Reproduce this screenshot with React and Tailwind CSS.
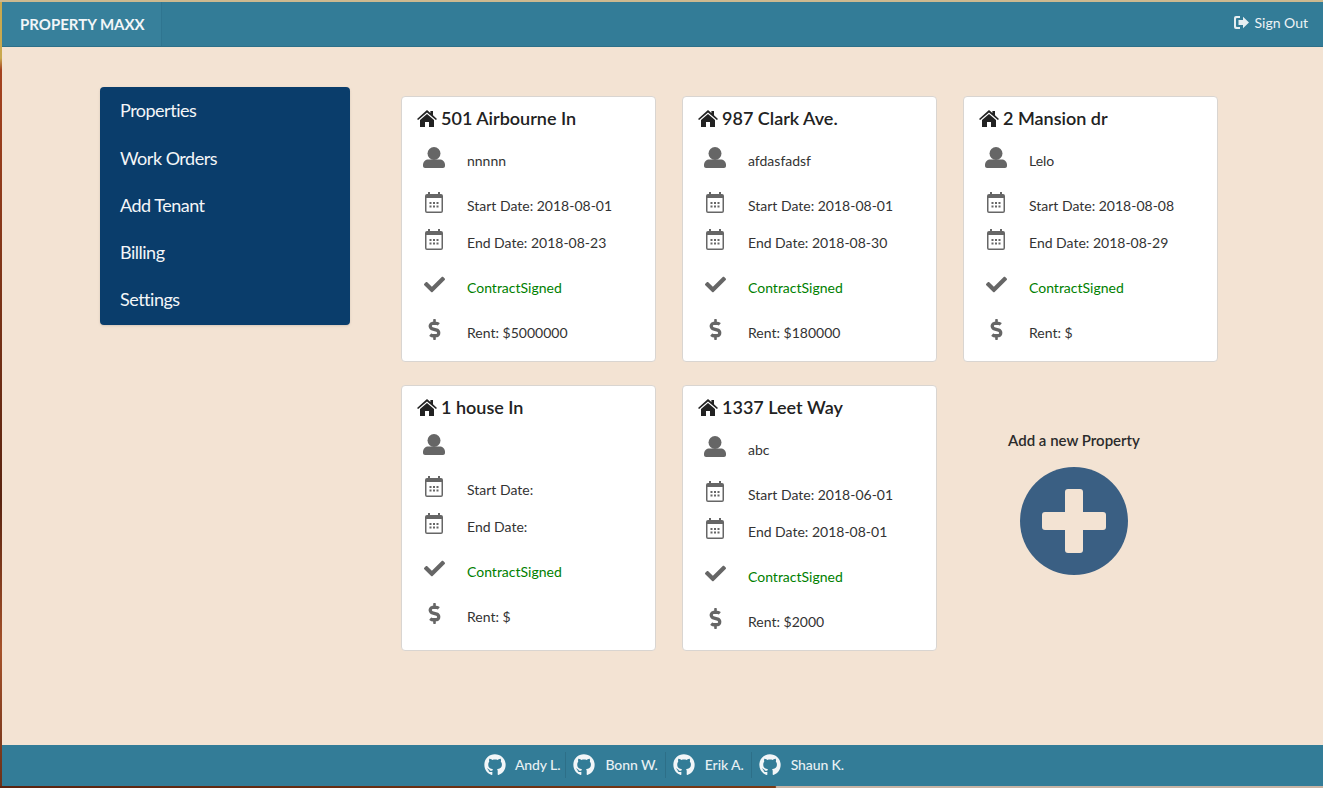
import React from "react";
import { FaGithub, FaCheck, FaDollarSign } from "react-icons/fa";

const HomeIcon = () => (
  <svg width="20" height="17" viewBox="0 0 20 17" className="shrink-0 text-[#222]" fill="currentColor">
    <path d="M10 0 L13.4 3 V1 H16 V5.3 L20 8.9 L18.9 10.1 L10 2.5 L1.1 10.1 L0 8.9 Z" />
    <path d="M10 4 L17 10 V17 H12 V12 H8 V17 H3 V10 Z" />
  </svg>
);
const UserIcon = () => (
  <svg width="22" height="21" viewBox="0 0 22 21" fill="#666">
    <circle cx="11" cy="6.500" r="6.500" />
    <path d="M0 18 C0 14.500 2.500 12.500 5.500 12.500 H16.500 C19.500 12.500 22 14.500 22 18 V19 C22 20 21 21 20 21 H2 C1 21 0 20 0 19 Z" />
  </svg>
);
const CalIcon = () => (
  <svg width="18" height="21" viewBox="0 0 18 21" fill="#666">
    <rect x="3" y="0" width="2" height="4" />
    <rect x="13" y="0" width="2" height="4" />
    <path fillRule="evenodd" d="M2 2 H16 A2 2 0 0 1 18 4 V19 A2 2 0 0 1 16 21 H2 A2 2 0 0 1 0 19 V4 A2 2 0 0 1 2 2 Z M1.500 6 V19 A0.500 0.500 0 0 0 2 19.500 H16 A0.500 0.500 0 0 0 16.500 19 V6 Z" />
    {[4.500, 8, 11.500].flatMap((x) => [10, 13.500].map((y) => <rect key={x + "-" + y} x={x} y={y} width="2" height="2" />))}
  </svg>
);
const LogOut = () => (
  <svg width="15" height="13" viewBox="0 0 15 13" fill="#e6eef1">
    <path d="M2 0 H6 V2 H3 Q2 2 2 3 V10 Q2 11 3 11 H6 V13 H2 Q0 13 0 11 V2 Q0 0 2 0 Z" />
    <path d="M4.500 4 H9 V0.800 L15 6.500 L9 12.200 V9 H4.500 Z" />
  </svg>
);
const PlusCircle = () => (
  <svg width="108" height="108" viewBox="0 0 108 108" className="mt-[17px]">
    <circle cx="54" cy="54" r="54" fill="#3a5f83" />
    <rect x="45" y="22" width="18" height="64" rx="3" fill="#f3e3d3" />
    <rect x="22" y="45" width="64" height="18" rx="3" fill="#f3e3d3" />
  </svg>
);

const Row = ({ icon, children, className = "h-[37px] mt-[8px]", color = "text-[#333]" }) => (
  <div className={"flex items-center " + className}>
    <div className="w-[34px] flex justify-center mb-[6px] shrink-0">{icon}</div>
    <div className={"ml-[16px] text-[14px] leading-[20px] " + color}>{children}</div>
  </div>
);

const cards = [
  { t: "501 Airbourne In", n: "nnnnn", s: "2018-08-01", e: "2018-08-23", r: "5000000" },
  { t: "987 Clark Ave.", n: "afdasfadsf", s: "2018-08-01", e: "2018-08-30", r: "180000" },
  { t: "2 Mansion dr", n: "Lelo", s: "2018-08-08", e: "2018-08-29", r: "" },
  { t: "1 house In", n: "", s: "", e: "", r: "" },
  { t: "1337 Leet Way", n: "abc", s: "2018-06-01", e: "2018-08-01", r: "2000" },
];

const Card = ({ c }) => (
  <div className="bg-white border border-[#d9d5d1] rounded-[4px] px-[15px] pb-[10px]">
    <div className="h-[42px] flex items-center gap-[4px] text-[18px] font-semibold text-[#222] mb-[3px]">
      <HomeIcon />
      <span>{c.t}</span>
    </div>
    <Row icon={<UserIcon />} className={c.n ? "h-[37px]" : "h-[32px]"}>{c.n}</Row>
    <Row icon={<CalIcon />}>Start Date: {c.s}</Row>
    <Row icon={<CalIcon />} className="h-[37px]">End Date: {c.e}</Row>
    <Row icon={<FaCheck size={21} color="#666" />} color="text-[#008000]">ContractSigned</Row>
    <Row icon={<FaDollarSign size={21} color="#666" />}>Rent: ${c.r}</Row>
  </div>
);

const team = [
  ["Andy L.", "pr-[5px]", "ml-[9px]"],
  ["Bonn W.", "pl-[7px] pr-[7px] border-l border-[#2d6f88]", "ml-[10px]"],
  ["Erik A.", "pl-[7px] pr-[7px] border-l border-[#2d6f88]", "ml-[10px]"],
  ["Shaun K.", "pl-[7px] border-l border-[#2d6f88]", "ml-[10px]"],
];

export default function App() {
  return (
    <div className="h-[788px] w-[1323px] overflow-hidden flex flex-col bg-[linear-gradient(180deg,#c9a94f_0px,#c9a94f_58px,#a5431f_70px,#7a3317_300px,#5a2410_500px,#a5522a_650px,#6b3018_788px)] font-['Lato','Noto_Sans',sans-serif]">
      <div className="h-[2px] shrink-0 bg-[#cdb98f]" />
      <div className="flex-1 min-h-0 flex flex-col ml-[2px]">
        <header className="h-[45px] shrink-0 bg-[#337c97] border-b border-[#2d7089] flex items-center justify-between text-white">
          <div className="h-full w-[160px] bg-[#37809b] border-r border-[#2f7590] pl-[18px] flex items-center text-[15px] font-bold text-[#f2f6f8]">
            PROPERTY MAXX
          </div>
          <div className="flex items-center gap-[6px] pr-[15px] pb-[4px] text-[14px] text-[#eef3f5]">
            <LogOut />
            <span>Sign Out</span>
          </div>
        </header>

        <main className="flex-1 min-h-0 bg-[#f3e3d3] flex items-start pl-[98px]">
          <nav className="mt-[40px] w-[250px] h-[238px] shrink-0 bg-[#0a3d6b] rounded-[4px] shadow-sm text-[18px] tracking-[-0.5px] pt-[1px]">
            {["Properties", "Work Orders", "Add Tenant", "Billing", "Settings"].map((x, i) => (
              <div key={x} className={"h-[47px] flex items-center pl-[20px] text-[#f4f6f8] " + (i === 0 ? "pb-[2px]" : "")}>{x}</div>
            ))}
          </nav>
          <section className="ml-[51px] mt-[49px] w-[817px] grid grid-cols-[255px_255px_255px] gap-x-[26px] gap-y-[23px]">
            {cards.map((c) => <Card key={c.t} c={c} />)}
            <div className="flex flex-col items-center pt-[45px] pr-[33px]">
              <div className="text-[15px] font-semibold leading-[20px] text-[#2b2b2b]">Add a new Property</div>
              <PlusCircle />
            </div>
          </section>
        </main>

        <footer className="h-[41px] shrink-0 bg-[#337c97] flex items-center justify-center pl-[3px] pb-[2px]">
          {team.map(([n, cls, ml]) => (
            <div key={n} className={"flex items-center h-[26px] text-[14px] font-medium tracking-[-0.1px] text-[#e8f0f3] " + cls}>
              <FaGithub size={22} color="#f2f6f8" />
              <span className={ml}>{n}</span>
            </div>
          ))}
        </footer>
      </div>
      <div className="h-[2px] shrink-0 bg-[linear-gradient(90deg,#5a2410_0%,#7a3a14_58.600%,#c8b4a4_58.700%,#c8b4a4_100%)]" />
    </div>
  );
}
